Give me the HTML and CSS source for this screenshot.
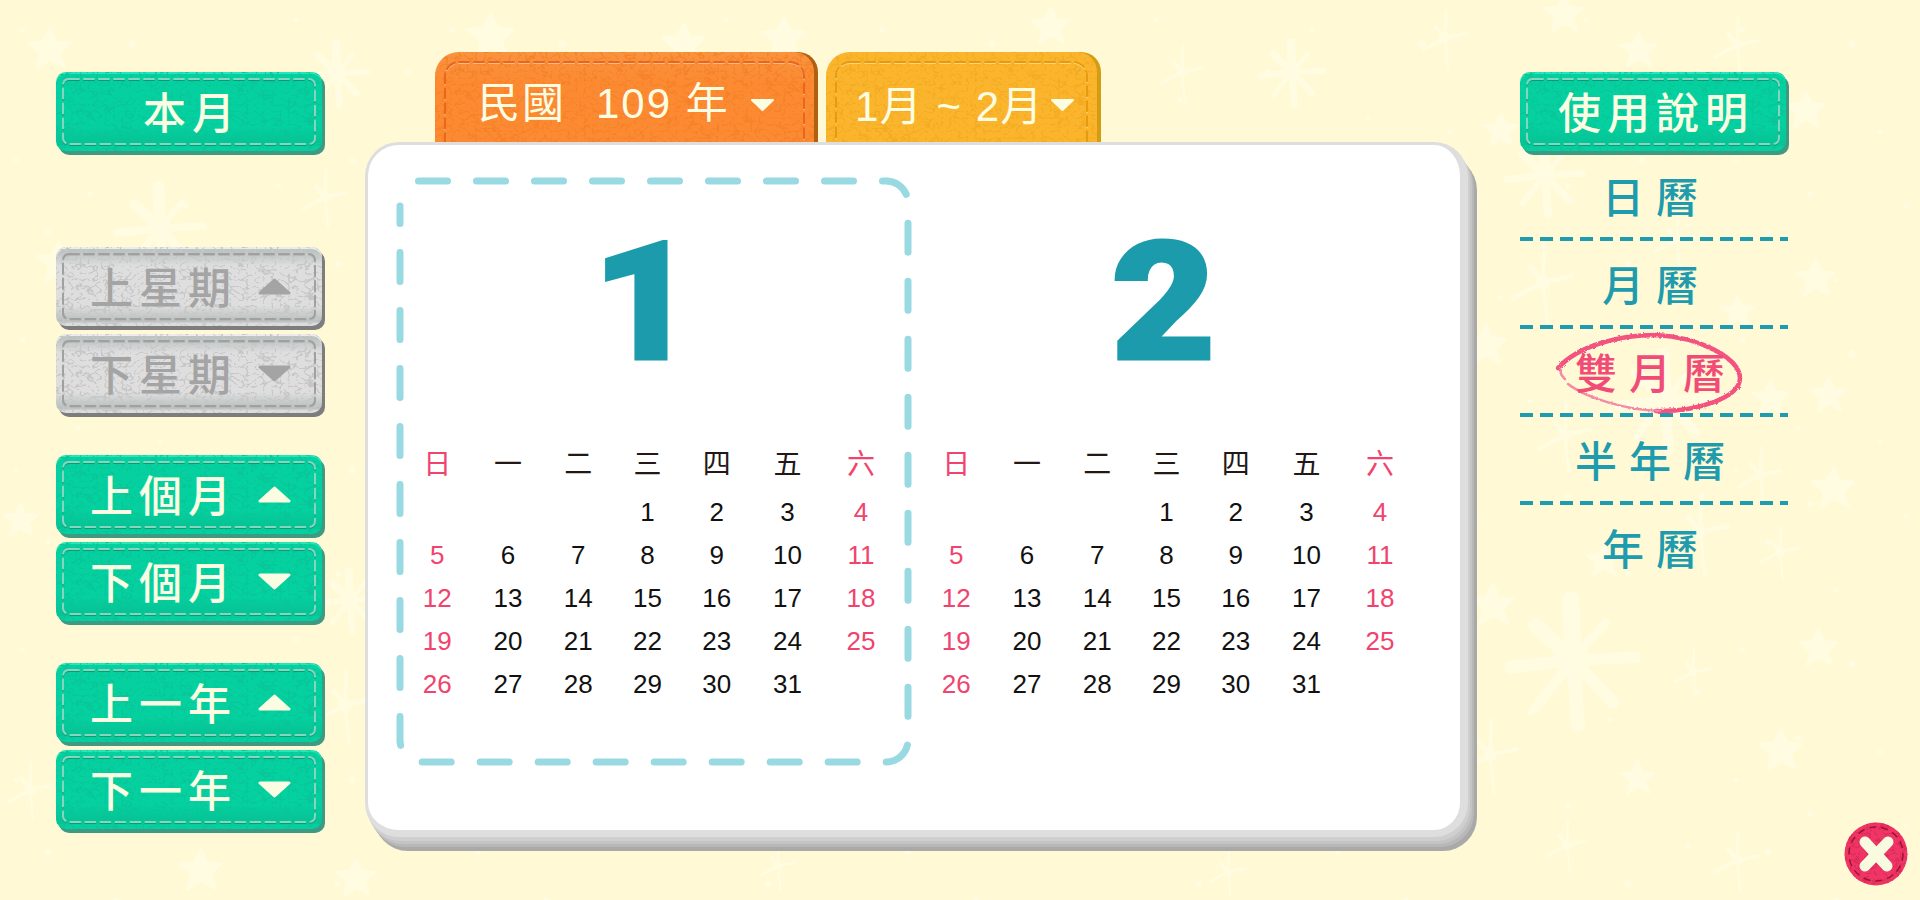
FILE: index.html
```html
<!DOCTYPE html>
<html lang="zh-Hant">
<head>
<meta charset="utf-8">
<title>雙月曆</title>
<link rel="stylesheet" href="styles.css">
</head>
<body>
<svg class="defs" width="0" height="0" aria-hidden="true">
  <defs>
    <filter id="leather" x="0" y="0" width="100%" height="100%" color-interpolation-filters="sRGB">
      <feTurbulence type="turbulence" baseFrequency="0.12 0.15" numOctaves="2" seed="7" result="n"/>
      <feColorMatrix in="n" type="matrix" values="0 0 0 0 0  0 0 0 0 0  0 0 0 0 0  -10 0 0 0 1.7" result="v"/>
      <feComposite in="SourceGraphic" in2="v" operator="in"/>
    </filter>
    <filter id="rough" x="-5%" y="-10%" width="110%" height="120%">
      <feTurbulence type="fractalNoise" baseFrequency="0.35" numOctaves="2" seed="3" result="r"/>
      <feDisplacementMap in="SourceGraphic" in2="r" scale="3"/>
    </filter>
    <g id="s1" class="petal">
      <circle r="13"/>
      <line x1="0" y1="0" x2="-2" y2="-48" stroke-width="14"/>
      <line x1="0" y1="0" x2="26" y2="-30" stroke-width="7"/>
      <line x1="0" y1="0" x2="50" y2="-2" stroke-width="9"/>
      <line x1="0" y1="0" x2="32" y2="34" stroke-width="10"/>
      <line x1="0" y1="0" x2="4" y2="52" stroke-width="11"/>
      <line x1="0" y1="0" x2="-30" y2="38" stroke-width="8"/>
      <line x1="0" y1="0" x2="-50" y2="6" stroke-width="10"/>
      <line x1="0" y1="0" x2="-30" y2="-28" stroke-width="12"/>
    </g>
    <g id="s2" class="petal">
      <circle r="9"/>
      <line x1="0" y1="0" x2="2" y2="-50" stroke-width="5"/>
      <line x1="0" y1="0" x2="38" y2="-8" stroke-width="6"/>
      <line x1="0" y1="0" x2="6" y2="56" stroke-width="4"/>
      <line x1="0" y1="0" x2="-40" y2="22" stroke-width="6"/>
      <line x1="0" y1="0" x2="-16" y2="-20" stroke-width="7"/>
    </g>
    <path id="s3" class="blob" d="M2 -40 L14 -14 L42 -12 L20 8 L30 36 L2 20 L-24 38 L-16 8 L-40 -12 L-12 -14 Z"/>
    <pattern id="dots" width="430" height="310" patternUnits="userSpaceOnUse">
      <g class="dot">
        <circle cx="22" cy="30" r="3"/><circle cx="78" cy="118" r="2.5"/><circle cx="132" cy="44" r="3.5"/>
        <circle cx="186" cy="206" r="2.5"/><circle cx="240" cy="92" r="3"/><circle cx="296" cy="20" r="2.5"/>
        <circle cx="352" cy="160" r="3.5"/><circle cx="408" cy="72" r="3"/><circle cx="48" cy="232" r="3"/>
        <circle cx="116" cy="280" r="2.5"/><circle cx="210" cy="298" r="3"/><circle cx="278" cy="186" r="3"/>
        <circle cx="338" cy="264" r="3"/><circle cx="398" cy="226" r="2.5"/><circle cx="160" cy="132" r="2.5"/>
        <circle cx="16" cy="160" r="2.5"/><circle cx="90" cy="194" r="3"/><circle cx="320" cy="100" r="2.5"/>
      </g>
    </pattern>
  </defs>
</svg>

<svg class="backdrop" width="1920" height="900" viewBox="0 0 1920 900" aria-hidden="true">
  <rect width="1920" height="900" fill="url(#dots)"/>
  <use href="#s3" transform="translate(49 49) scale(.5)"/>
  <use href="#s1" transform="translate(337 73) scale(.62)"/>
  <use href="#s1" transform="translate(160 228) scale(.85)"/>
  <use href="#s2" transform="translate(325 197) scale(.55)"/>
  <use href="#s3" transform="translate(58 262) scale(.5)"/>
  <use href="#s2" transform="translate(345 705) scale(.7)"/>
  <use href="#s3" transform="translate(20 520) scale(.4)"/>
  <use href="#s1" transform="translate(350 600) scale(.6)"/>
  <use href="#s2" transform="translate(30 790) scale(.55)"/>
  <use href="#s3" transform="translate(200 870) scale(.5)"/>
  <use href="#s3" transform="translate(490 36) scale(.55)"/>
  <use href="#s3" transform="translate(683 44) scale(.5)"/>
  <use href="#s3" transform="translate(783 38) scale(.5)"/>
  <use href="#s2" transform="translate(1182 72) scale(.55)"/>
  <use href="#s1" transform="translate(1292 72) scale(.62)"/>
  <use href="#s2" transform="translate(1445 38) scale(.55)"/>
  <use href="#s3" transform="translate(1050 26) scale(.45)"/>
  <use href="#s3" transform="translate(355 878) scale(.45)"/>
  <use href="#s2" transform="translate(778 866) scale(.45)"/>
  <use href="#s2" transform="translate(1228 872) scale(.45)"/>
  <use href="#s3" transform="translate(1500 130) scale(.4)"/>
  <use href="#s3" transform="translate(1563 14) scale(.45)"/>
  <use href="#s3" transform="translate(1638 50) scale(.42)"/>
  <use href="#s2" transform="translate(1737 45) scale(.55)"/>
  <use href="#s3" transform="translate(1805 110) scale(.45)"/>
  <use href="#s1" transform="translate(1545 175) scale(.75)"/>
  <use href="#s2" transform="translate(1543 282) scale(.75)"/>
  <use href="#s2" transform="translate(1677 240) scale(.55)"/>
  <use href="#s3" transform="translate(1815 278) scale(.45)"/>
  <use href="#s3" transform="translate(1737 312) scale(.38)"/>
  <use href="#s3" transform="translate(1485 345) scale(.5)"/>
  <use href="#s1" transform="translate(1665 400) scale(.95)"/>
  <use href="#s3" transform="translate(1770 398) scale(.42)"/>
  <use href="#s3" transform="translate(1828 395) scale(.42)"/>
  <use href="#s2" transform="translate(1565 435) scale(.65)"/>
  <use href="#s2" transform="translate(1760 475) scale(.55)"/>
  <use href="#s3" transform="translate(1833 488) scale(.5)"/>
  <use href="#s2" transform="translate(1700 532) scale(.75)"/>
  <use href="#s3" transform="translate(1603 560) scale(.4)"/>
  <use href="#s2" transform="translate(1780 552) scale(.5)"/>
  <use href="#s3" transform="translate(1492 605) scale(.5)"/>
  <use href="#s1" transform="translate(1573 660) scale(1.25)"/>
  <use href="#s3" transform="translate(1818 648) scale(.45)"/>
  <use href="#s2" transform="translate(1693 672) scale(.45)"/>
  <use href="#s2" transform="translate(1490 755) scale(.7)"/>
  <use href="#s3" transform="translate(1780 750) scale(.5)"/>
  <use href="#s3" transform="translate(1637 778) scale(.4)"/>
  <use href="#s2" transform="translate(1567 845) scale(.5)"/>
  <use href="#s2" transform="translate(1737 860) scale(.55)"/>
</svg>

<main class="page">
  <nav class="left-col">
    <div class="group group-first">
      <button class="btn green center"><svg class="tex"><rect/></svg><svg class="stitch"><rect class="st-d"/><rect class="st-l"/></svg><span class="label">本月</span></button>
    </div>
    <div class="group">
      <button class="btn grey"><svg class="tex"><rect/></svg><svg class="stitch"><rect class="st-d"/><rect class="st-l"/></svg><span class="label">上星期</span><svg class="tri" viewBox="0 0 33 17"><path d="M16.5 2 L31 15 H2 Z"/></svg></button>
      <button class="btn grey"><svg class="tex"><rect/></svg><svg class="stitch"><rect class="st-d"/><rect class="st-l"/></svg><span class="label">下星期</span><svg class="tri down" viewBox="0 0 33 17"><path d="M16.5 2 L31 15 H2 Z"/></svg></button>
    </div>
    <div class="group">
      <button class="btn green"><svg class="tex"><rect/></svg><svg class="stitch"><rect class="st-d"/><rect class="st-l"/></svg><span class="label">上個月</span><svg class="tri" viewBox="0 0 33 17"><path d="M16.5 2 L31 15 H2 Z"/></svg></button>
      <button class="btn green"><svg class="tex"><rect/></svg><svg class="stitch"><rect class="st-d"/><rect class="st-l"/></svg><span class="label">下個月</span><svg class="tri down" viewBox="0 0 33 17"><path d="M16.5 2 L31 15 H2 Z"/></svg></button>
    </div>
    <div class="group">
      <button class="btn green"><svg class="tex"><rect/></svg><svg class="stitch"><rect class="st-d"/><rect class="st-l"/></svg><span class="label">上一年</span><svg class="tri" viewBox="0 0 33 17"><path d="M16.5 2 L31 15 H2 Z"/></svg></button>
      <button class="btn green"><svg class="tex"><rect/></svg><svg class="stitch"><rect class="st-d"/><rect class="st-l"/></svg><span class="label">下一年</span><svg class="tri down" viewBox="0 0 33 17"><path d="M16.5 2 L31 15 H2 Z"/></svg></button>
    </div>
  </nav>

  <section class="mid-col">
    <div class="tabs">
      <div class="tab orange"><svg class="tex"><rect/></svg><svg class="stitch"><rect class="st-d"/><rect class="st-l"/></svg><span class="tab-label"><span class="t-roc">民國</span><span class="t-year">109 年</span></span><svg class="tri-s" viewBox="0 0 25 14"><path d="M2 2 H23 L12.5 12 Z"/></svg></div>
      <div class="tab yellow"><svg class="tex"><rect/></svg><svg class="stitch"><rect class="st-d"/><rect class="st-l"/></svg><span class="tab-label tight">1月 ~ 2月</span><svg class="tri-s" viewBox="0 0 25 14"><path d="M2 2 H23 L12.5 12 Z"/></svg></div>
    </div>
    <div class="card">
      <article class="month">
        <svg class="marker" width="516" height="589" viewBox="0 0 516 589"><path d="M22.5 4 H490 A22 22 0 0 1 512 26 V563 A22 22 0 0 1 490 585 H26 A22 22 0 0 1 4 563 V29"/></svg>
        <div class="num">1</div>
        <div class="grid">
          <b class="sun">日</b><b>一</b><b>二</b><b>三</b><b>四</b><b>五</b><b class="sat">六</b>
          <i></i><i></i><i></i><i>1</i><i>2</i><i>3</i><i class="red">4</i>
          <i class="red">5</i><i>6</i><i>7</i><i>8</i><i>9</i><i>10</i><i class="red">11</i>
          <i class="red">12</i><i>13</i><i>14</i><i>15</i><i>16</i><i>17</i><i class="red">18</i>
          <i class="red">19</i><i>20</i><i>21</i><i>22</i><i>23</i><i>24</i><i class="red">25</i>
          <i class="red">26</i><i>27</i><i>28</i><i>29</i><i>30</i><i>31</i><i></i>
        </div>
      </article>
      <article class="month">
        <div class="num">2</div>
        <div class="grid">
          <b class="sun">日</b><b>一</b><b>二</b><b>三</b><b>四</b><b>五</b><b class="sat">六</b>
          <i></i><i></i><i></i><i>1</i><i>2</i><i>3</i><i class="red">4</i>
          <i class="red">5</i><i>6</i><i>7</i><i>8</i><i>9</i><i>10</i><i class="red">11</i>
          <i class="red">12</i><i>13</i><i>14</i><i>15</i><i>16</i><i>17</i><i class="red">18</i>
          <i class="red">19</i><i>20</i><i>21</i><i>22</i><i>23</i><i>24</i><i class="red">25</i>
          <i class="red">26</i><i>27</i><i>28</i><i>29</i><i>30</i><i>31</i><i></i>
        </div>
      </article>
    </div>
  </section>

  <aside class="right-col">
    <button class="btn green center"><svg class="tex"><rect/></svg><svg class="stitch"><rect class="st-d"/><rect class="st-l"/></svg><span class="label">使用說明</span></button>
    <ul class="views">
      <li><span>日曆</span></li>
      <li><span>月曆</span></li>
      <li class="active"><svg class="circle" width="186" height="84" viewBox="0 0 186 84"><path class="c-main" d="M2 36 C22 14 62 3 100 3 C142 5 183 25 184 46 C184 66 140 80 100 79"/><path class="c-thin" d="M104 79 C70 78 30 66 12 52 M5 38 C4 42 6 44 9 47"/></svg><span>雙月曆</span></li>
      <li><span>半年曆</span></li>
      <li><span>年曆</span></li>
    </ul>
  </aside>

  <button class="close" aria-label="關閉">
    <svg width="64" height="64" viewBox="-32 -32 64 64">
      <circle class="c-base" r="31.5"/>
      <circle class="c-tex" r="31.5"/>
      <circle class="c-stitch" r="27"/>
      <path class="c-x" d="M-11 -12 L11 12 M12 -12 L-11 12"/>
    </svg>
  </button>
</main>
</body>
</html>
```

FILE: styles.css
```css
* { box-sizing: border-box; }
html, body { margin: 0; padding: 0; }
body {
  width: 1920px;
  height: 900px;
  overflow: hidden;
  background: #fff9d5;
  font-family: "Liberation Sans", "Noto Sans CJK TC", sans-serif;
  position: relative;
}
.defs { position: absolute; }
.backdrop { position: absolute; left: 0; top: 0; }
.petal { fill: #fffce2; stroke: #fffce2; stroke-linecap: round; }
.blob { fill: #fffce2; stroke: #fffce2; stroke-width: 6; stroke-linejoin: round; }
.dot { fill: #fffce2; }

.page {
  position: relative;
  width: 1920px;
  height: 900px;
  display: flex;
  align-items: flex-start;
}

/* left column */
.left-col {
  margin-left: 56px;
  padding-top: 72px;
  width: 266px;
  display: flex;
  flex-direction: column;
  gap: 42px;
  flex: none;
}
.group { display: flex; flex-direction: column; gap: 8px; }
.group-first { margin-bottom: 54px; }

/* stitched leather buttons */
.btn {
  position: relative;
  width: 266px;
  height: 79px;
  padding: 5px 31px 0 34px;
  border: 0;
  border-radius: 10px;
  display: flex;
  align-items: center;
  justify-content: space-between;
  font: 500 43px "Liberation Sans", "Noto Sans CJK TC", sans-serif;
  letter-spacing: 6px;
  flex: none;
}
.btn.center { justify-content: center; padding: 5px 0 0 6px; }
.label { position: relative; line-height: 1; }

.tex, .stitch { position: absolute; pointer-events: none; }
.tex { left: 0; top: 0; width: 100%; height: 100%; border-radius: inherit; }
.tex rect { width: 100%; height: 100%; filter: url(#leather); }
.stitch { left: 6px; top: 6px; width: calc(100% - 12px); height: calc(100% - 12px); overflow: visible; }
.stitch rect {
  x: 1px; y: 1px;
  width: calc(100% - 2px);
  height: calc(100% - 2px);
  rx: 6px;
  fill: none;
  stroke-dasharray: 10 5;
  stroke-linecap: round;
}
.st-d { stroke-width: 2px; transform: translate(0, 1px); }
.st-l { stroke-width: 2px; }

.tri { position: relative; width: 33px; height: 17px; flex: none; margin-top: -5px; }
.tri path { fill: currentColor; stroke: currentColor; stroke-width: 3; stroke-linejoin: round; }
.tri.down { transform: rotate(180deg); }

.green {
  color: #fbfde2;
  background:
    linear-gradient(rgba(0, 90, 70, 0) 70%, rgba(0, 90, 70, .12) 92%, rgba(0, 90, 70, 0) 95%),
    #05d09f;
  box-shadow: inset 0 2px 0 #25e7b8, 3px 4px 0 #3f9a83;
}
.green .tex rect { fill: #0ac597; }
.green .st-d { stroke: #0a9c7a; }
.green .st-l { stroke: #86d6bf; }

.grey {
  color: #a4a4a4;
  background:
    linear-gradient(#bcc4c3 6%, rgba(200, 205, 205, 0) 24%, rgba(200, 205, 205, 0) 74%, #b8bfbe 94%, #dcdcdc 97%),
    #dedede;
  box-shadow: inset 0 2px 0 #ececec, 3px 4px 0 #7d7d7d;
}
.grey .tex rect { fill: #c6c6c6; }
.grey .st-d { stroke: #b8b8b8; }
.grey .st-l { stroke: #a0a0a0; }

/* middle column */
.mid-col {
  margin-left: 43px;
  padding-top: 52px;
  width: 1103px;
  flex: none;
  display: flex;
  flex-direction: column;
}
.tabs {
  display: flex;
  gap: 12px;
  padding-left: 70px;
  height: 90px;
}
.tab {
  position: relative;
  height: 100px;
  border-radius: 24px 20px 0 0;
  display: flex;
  align-items: flex-start;
  justify-content: space-between;
  color: #fbfde2;
  font-size: 42px;
  flex: none;
  overflow: hidden;
}
.tab .stitch { left: 9px; top: 9px; width: calc(100% - 18px); height: 120px; }
.tab .stitch rect { height: 118px; rx: 14px; }
.tab-label { position: relative; line-height: 1; letter-spacing: 2px; white-space: pre; }
.t-roc { margin-right: 30px; }
.tri-s { position: relative; width: 25px; height: 14px; flex: none; }
.tri-s path { fill: #fbfde2; stroke: #fbfde2; stroke-width: 2; stroke-linejoin: round; }

.orange {
  width: 379px;
  padding: 31px 39px 0 43px;
  background: linear-gradient(#f8933f, #fc8a33 30%), #fc8a33;
  box-shadow: 4px 0 0 #b0600f;
}
.orange .tex rect { fill: #f68126; }
.orange .st-d { stroke: #f9b98a; }
.orange .st-l { stroke: #e8671b; }
.orange .tri-s { margin-top: 15px; }

.yellow {
  width: 271px;
  padding: 31px 22px 0 29px;
  background: #fbb52c;
  box-shadow: 4px 0 0 #d49c12;
}
.yellow .tex rect { fill: #f3ab24; }
.yellow .st-d { stroke: #fbd67e; }
.yellow .st-l { stroke: #e69a10; }
.yellow .tri-s { margin-top: 15px; }
.tight { letter-spacing: 1.5px; margin-top: 3px; }

/* calendar card */
.card {
  position: relative;
  width: 1103px;
  height: 695px;
  background: #fff;
  border-style: solid;
  border-color: #dedede;
  border-width: 3px 8px 7px 3px;
  border-radius: 34px;
  box-shadow: 2px 4px 0 #cfcfcf, 4px 7px 0 #c4c4c4, 6px 10px 0 #b8b8b8, 9px 14px 0 #a9a9a9;
  display: flex;
}
.month {
  position: relative;
  width: 519px;
  padding-left: 34px;
  flex: none;
}
.marker {
  position: absolute;
  left: 28px;
  top: 32px;
  overflow: visible;
}
.marker path {
  fill: none;
  stroke: #98d9e2;
  stroke-width: 7;
  stroke-linecap: round;
  stroke-dasharray: 29 29;
}
.num {
  height: 303px;
  padding-top: 58px;
  text-align: center;
  font: 900 166px/200px Roboto, "Liberation Sans", sans-serif;
  color: #1b9bab;
  -webkit-text-stroke: 3px #1b9bab;
  transform: scaleX(1.09);
}
.grid {
  display: grid;
  width: 497px;
  grid-template-columns: 70.5px 71px 69.5px 69px 69.5px 72px 75px;
  grid-auto-rows: 43px;
  text-align: center;
  font-size: 26px;
  color: #111;
}
.grid b {
  font-weight: 400;
  font-size: 28px;
  line-height: 43px;
  color: #231815;
  transform: translateY(-5px);
}
.grid i { font-style: normal; line-height: 43px; }
.grid .sun, .grid .sat, .grid .red { color: #f0436e; }

/* right column */
.right-col {
  margin-left: 52px;
  padding-top: 72px;
  width: 268px;
  flex: none;
}
.views {
  list-style: none;
  margin: 2px 0 0;
  padding: 0;
}
.views li {
  position: relative;
  height: 88px;
  display: flex;
  align-items: center;
  justify-content: center;
  color: #1f9bae;
  font-size: 42px;
  font-weight: 500;
  letter-spacing: 12px;
  padding: 4px 0 0 4px;
  background: repeating-linear-gradient(90deg, #1f9bae 0 13px, transparent 13px 20px) left bottom / 100% 4px no-repeat;
}
.views li:last-child { background: none; }
.views .active { color: #f14b78; }
.views span { position: relative; line-height: 1; }
.circle { position: absolute; left: 36px; top: 3px; overflow: visible; }
.c-main { fill: none; stroke: #f2527f; stroke-width: 4.5; stroke-linecap: round; filter: url(#rough); }
.c-thin { fill: none; stroke: #f58aa6; stroke-width: 2.5; stroke-linecap: round; filter: url(#rough); }

/* close button */
.close {
  position: absolute;
  left: 1844px;
  top: 822px;
  width: 64px;
  height: 64px;
  padding: 0;
  border: 0;
  background: none;
}
.close svg { display: block; }
.c-base { fill: #ee3565; }
.c-tex { fill: #dc2b58; filter: url(#leather); }
.c-stitch { fill: none; stroke: #a0122f; stroke-width: 1.5; stroke-dasharray: 7 5; }
.c-x { fill: none; stroke: #f8fbe0; stroke-width: 11; stroke-linecap: round; }
```
